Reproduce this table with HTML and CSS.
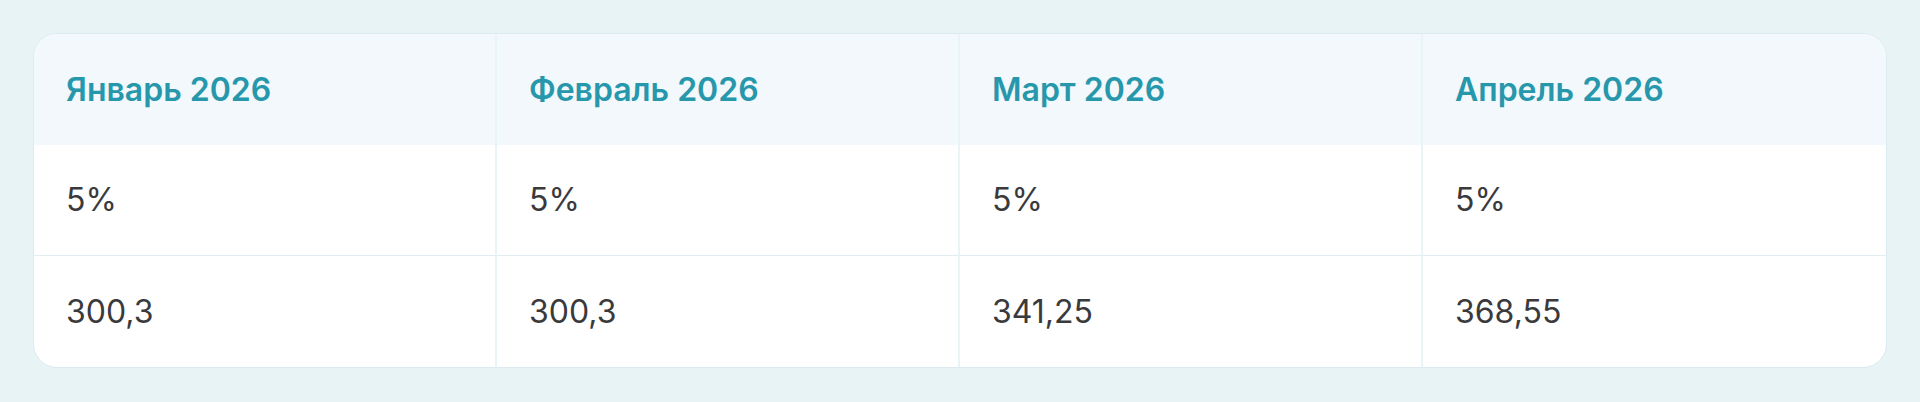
FILE: index.html
```html
<!DOCTYPE html>
<html lang="ru">
<head>
<meta charset="utf-8">
<link rel="stylesheet" href="styles.css">
</head>
<body>
<div class="page">
  <table class="rates">
    <thead>
      <tr>
        <th>Январь 2026</th>
        <th>Февраль 2026</th>
        <th>Март 2026</th>
        <th>Апрель 2026</th>
      </tr>
    </thead>
    <tbody>
      <tr>
        <td>5%</td>
        <td>5%</td>
        <td>5%</td>
        <td>5%</td>
      </tr>
      <tr>
        <td>300,3</td>
        <td>300,3</td>
        <td>341,25</td>
        <td>368,55</td>
      </tr>
    </tbody>
  </table>
</div>
</body>
</html>
```
FILE: styles.css
```css
html, body {
  margin: 0;
  padding: 0;
  background: #e8f3f5;
}
.page {
  padding: 33px;
  font-family: Inter, "Noto Sans", sans-serif;
}
.rates {
  width: 100%;
  border-collapse: separate;
  border-spacing: 0;
  table-layout: fixed;
  background: #ffffff;
  border: 1px solid #dcebef;
  border-radius: 24px;
  overflow: hidden;
}
.rates th,
.rates td {
  text-align: left;
  padding: 0 32px;
  height: 111px;
  box-sizing: border-box;
  font-size: 32px;
  line-height: 40px;
  border-right: 2px solid #e9f4f6;
}
.rates th:last-child,
.rates td:last-child {
  border-right: none;
}
.rates th {
  background: #f2f8fb;
  color: #2797ab;
  font-weight: 600;
}
.rates td {
  color: #3a3a3c;
  font-weight: 400;
}
.rates tbody tr:first-child td {
  border-bottom: 1px solid #e2edf1;
}
```
